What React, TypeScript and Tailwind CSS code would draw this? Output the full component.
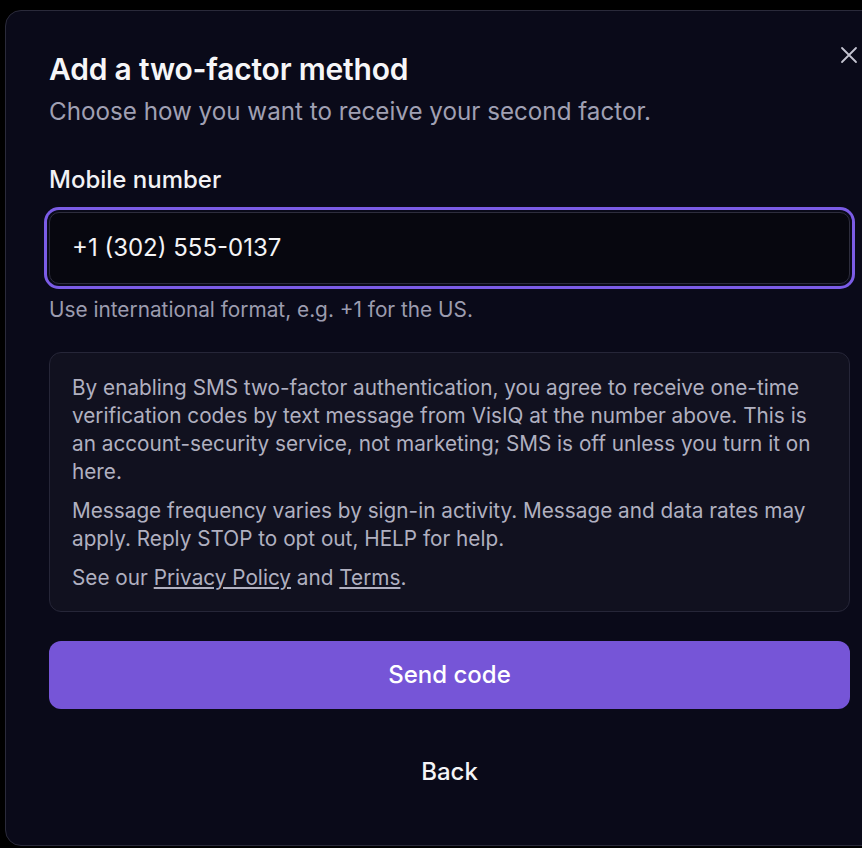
import React, { useState } from 'react';

const font = { fontFamily: 'Inter, "Noto Sans", sans-serif' };

const CloseIcon = () => (
  <svg width="20" height="20" viewBox="0 0 20 20" fill="none" stroke="currentColor" strokeWidth="1.8" strokeLinecap="round">
    <path d="M3 3l14 14M17 3L3 17" />
  </svg>
);

const App: React.FC = () => {
  const [phone, setPhone] = useState('+1 (302) 555-0137');

  return (
    <div className="w-[862px] h-[848px] overflow-hidden bg-black pt-[10px] pl-[5px]" style={font}>
      <div className="relative w-[900px] h-[836px] rounded-[16px] border border-[#2a2a3a] bg-[#0a0a19] px-[43px] pt-[40px]">
        <button className="absolute top-[34px] left-[833px] text-[#c4c4d0]">
          <CloseIcon />
        </button>

        <div className="w-[801px]">
          <h2 className="text-[30px] leading-[36px] font-semibold text-[#f6f6f8] tracking-[-0.2px]">
            Add a two-factor method
          </h2>
          <p className="mt-[10px] text-[24.2px] leading-[30px] text-[#a0a0b3]">
            Choose how you want to receive your second factor.
          </p>

          <label className="block mt-[38px] text-[24px] leading-[30px] font-medium text-[#f2f2f5]">
            Mobile number
          </label>
          <div className="mt-[17px] h-[72px] rounded-[10px] border border-[#2d2d3d] bg-[#07070f] ring-[3px] ring-[#7b5ce6] ring-offset-2 ring-offset-[#0a0a19] flex items-center px-[22px]">
            <input
              value={phone}
              onChange={(e) => setPhone(e.target.value)}
              className="w-full bg-transparent outline-none text-[24px] text-[#f4f4f6]"
            />
          </div>
          <p className="mt-[12px] text-[20.8px] leading-[28px] text-[#9c9caf]">
            Use international format, e.g. +1 for the US.
          </p>

          <div className="mt-[28px] rounded-[12px] border border-[#262638] bg-[#11111f] px-[22px] pt-[21px] pb-[19px] text-[20.75px] leading-[28px] text-[#b0b0c0]">
            <p>
              By enabling SMS two-factor authentication, you agree to receive one-time verification codes by text
              message from VisIQ at the number above. This is an account-security service, not marketing; SMS is off
              unless you turn it on here.
            </p>
            <p className="mt-[11px]">
              Message frequency varies by sign-in activity. Message and data rates may apply. Reply STOP to opt out,
              HELP for help.
            </p>
            <p className="mt-[11px]">
              See our <a className="underline underline-offset-2">Privacy Policy</a> and{' '}
              <a className="underline underline-offset-2">Terms</a>.
            </p>
          </div>

          <button className="mt-[29px] w-full h-[68px] rounded-[12px] bg-[#7655d7] text-[24px] font-medium text-white">
            Send code
          </button>
          <button className="mt-[29px] w-full h-[68px] text-[24px] font-medium text-[#f4f4f6]">
            Back
          </button>
        </div>
      </div>
    </div>
  );
};

export default App;
